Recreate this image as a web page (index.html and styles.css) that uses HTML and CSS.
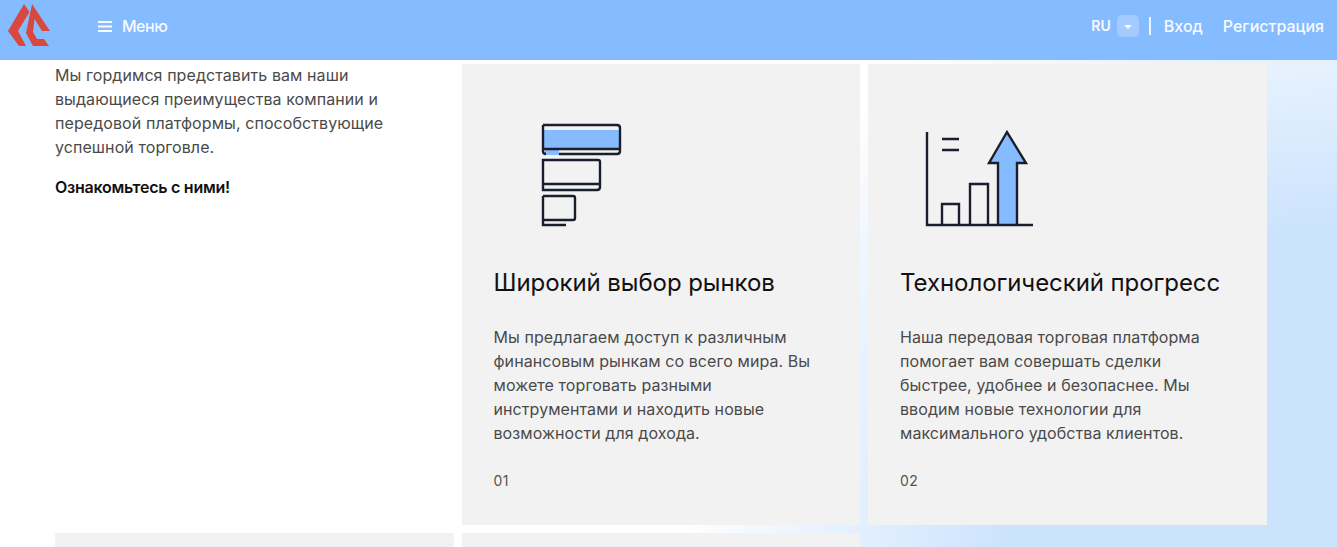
FILE: index.html
```html
<!DOCTYPE html>
<html lang="en">
<head>
    <meta charset="UTF-8">
    <title>Преимущества</title>
    <meta name="viewport" content="width=device-width, initial-scale=1.0">
    <link rel="stylesheet" href="styles.css">
</head>
<body>
    <header class="topbar">
        <div class="topbar-left">
            <svg class="logo" viewBox="4 2 50 50">
                <path d="M24 5L29.500 13L18 32L26 47H19L8 32Z"/>
                <path d="M32 5L50 32H42L34.500 20L33 33L37 40H44L49 47H33L26 34Z"/>
            </svg>
            <a class="menu-link" href="#">
                <svg class="menu-icon" viewBox="0 0 14 11">
                    <path d="M0 1h14M0 5.500h14M0 10h14"/>
                </svg>
                Меню
            </a>
        </div>
        <nav class="topbar-right">
            <span class="lang">RU</span>
            <span class="lang-btn"><i class="caret"></i></span>
            <span class="divider"></span>
            <a href="#">Вход</a>
            <a href="#">Регистрация</a>
        </nav>
    </header>

    <main class="features">
        <div class="intro">
            <p>Мы гордимся представить вам наши выдающиеся преимущества компании и передовой платформы, способствующие успешной торговле.</p>
            <p class="intro-strong">Ознакомьтесь с ними!</p>
        </div>

        <div class="card">
            <svg class="card-icon" viewBox="494 96 144 144">
                <rect class="blue" x="543" y="130" width="77" height="18"/>
                <rect class="blue" x="545" y="148" width="14" height="7"/>
                <path d="M543 125H617Q620 125 620 128V151Q620 154 617 154H559"/>
                <path d="M543 125V151Q543 154 546 154M543 149H620"/>
                <path d="M543 160H598Q600 160 600 162V187Q600 190 597 190H543ZM543 184H600"/>
                <path d="M543 196H573Q575 196 575 198V218Q575 220 573 220H543M543 196V225H566"/>
            </svg>
            <h3>Широкий выбор рынков</h3>
            <p>Мы предлагаем доступ к различным финансовым рынкам со всего мира. Вы можете торговать разными инструментами и находить новые возможности для дохода.</p>
            <span class="card-num">01</span>
        </div>

        <div class="card">
            <svg class="card-icon" viewBox="900 96 144 144">
                <path class="blue" d="M1007 132L1026 163H1017V225H998V163H989Z"/>
                <path d="M927 132V225H1033"/>
                <path d="M942 139H959M942 150H959"/>
                <path d="M942 225V204H959V225M970 225V184H988V225"/>
                <path d="M998 225V163H989L1007 132L1026 163H1017V225"/>
            </svg>
            <h3>Технологический прогресс</h3>
            <p>Наша передовая торговая платформа помогает вам совершать сделки быстрее, удобнее и безопаснее. Мы вводим новые технологии для максимального удобства клиентов.</p>
            <span class="card-num">02</span>
        </div>

        <div class="card"></div>
        <div class="card"></div>
    </main>
</body>
</html>
```

FILE: styles.css
```css
/* Global Reset */
* {
    margin: 0;
    padding: 0;
    box-sizing: border-box;
}
html, body {
    height: 100%;
}
body {
    font-family: 'Inter', 'Liberation Sans', sans-serif;
    font-size: 16px;
    line-height: 24px;
    letter-spacing: 0.08px;
    color: #4a4a4a;
    background: radial-gradient(ellipse 660px 640px at 100% 100%, #cce3fd 50%, #fff 100%);
    overflow: hidden;
}
a {
    color: #fff;
    text-decoration: none;
}

/* Top bar */
.topbar {
    height: 60px;
    background-color: #85bbff;
    color: #fff;
    display: flex;
    justify-content: space-between;
    align-items: center;
    padding: 0 13px 0 4px;
}
.topbar-left {
    display: flex;
    align-items: center;
}
.logo {
    width: 50px;
    height: 50px;
    margin-top: -8px;
    fill: #d9483f;
}
.menu-link {
    display: flex;
    align-items: center;
    gap: 10px;
    margin-left: 44px;
    margin-top: -8px;
    letter-spacing: -0.5px;
    font-weight: 500;
    opacity: 0.95;
}
.menu-icon {
    width: 14px;
    height: 11px;
    fill: none;
    stroke: #fff;
    stroke-width: 2;
}
.topbar-right {
    display: flex;
    align-items: center;
    margin-top: -8px;
}
.topbar-right a {
    margin-left: 20px;
    letter-spacing: 0;
    font-weight: 500;
    opacity: 0.95;
}
.topbar-right .divider + a {
    margin-left: 13px;
}
.lang {
    font-size: 14px;
    font-weight: 600;
    opacity: 0.95;
}
.lang-btn {
    width: 22px;
    height: 22px;
    margin-left: 6px;
    border-radius: 5px;
    background-color: #a3cbff;
    display: flex;
    justify-content: center;
    align-items: center;
}
.caret {
    border-left: 4px solid transparent;
    border-right: 4px solid transparent;
    border-top: 4px solid #fff;
    margin-top: 2px;
}
.divider {
    width: 2px;
    height: 18px;
    margin-left: 10px;
    background-color: #fff;
    opacity: 0.85;
}

/* Feature grid */
.features {
    display: grid;
    grid-template-columns: repeat(3, 398.500px);
    grid-auto-rows: 461px;
    gap: 8px;
    padding: 4px 0 0 55px;
}
.intro {
    margin-top: -1px;
}
.intro p {
    max-width: 340px;
    margin-bottom: 16px;
}
.intro .intro-strong {
    color: #111;
    font-weight: 600;
    letter-spacing: -0.25px;
}
.card {
    background-color: #f2f2f2;
    padding: 32px;
}
.card-icon {
    display: block;
    width: 144px;
    height: 144px;
    fill: none;
    stroke: #1a1f2e;
    stroke-width: 2.400;
}
.card-icon .blue {
    fill: #86bcff;
    stroke: none;
}
.card h3 {
    font-size: 24px;
    line-height: 32px;
    font-weight: 400;
    letter-spacing: -0.07px;
    color: #111;
    margin: 27px 0 26px;
}
.card-num {
    display: block;
    margin-top: 24px;
    font-size: 14px;
    letter-spacing: 0.5px;
    color: #555;
}
```
